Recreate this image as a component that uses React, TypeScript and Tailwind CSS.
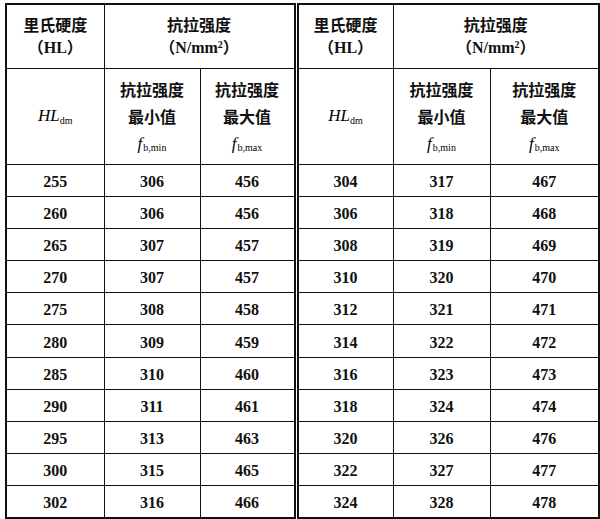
import type { ReactNode } from 'react';

const rows: [number, number, number, number, number, number][] = [
  [255, 306, 456, 304, 317, 467],
  [260, 306, 456, 306, 318, 468],
  [265, 307, 457, 308, 319, 469],
  [270, 307, 457, 310, 320, 470],
  [275, 308, 458, 312, 321, 471],
  [280, 309, 459, 314, 322, 472],
  [285, 310, 460, 316, 323, 473],
  [290, 311, 461, 318, 324, 474],
  [295, 313, 463, 320, 326, 476],
  [300, 315, 465, 322, 327, 477],
  [302, 316, 466, 324, 328, 478],
];

const cjk = "font-['Noto_Sans_CJK_SC',sans-serif] font-bold text-[16px] text-[#111]";
const latin = "font-['Liberation_Serif',serif] font-bold text-[16px]";
const cell = 'border border-[#111] text-center align-middle p-0';
const split = 'border-r-[5px] border-double';

function Hl() {
  return (
    <span className="font-['Liberation_Serif',serif] text-[17px] italic">
      HL<sub className="text-[10px] not-italic">dm</sub>
    </span>
  );
}

function Fb({ sub }: { sub: string }) {
  return (
    <span className="font-['Liberation_Serif',serif] text-[16px]">
      <i className="text-[17px]">f</i>
      <sub className="ml-[1px] text-[10px]">b,{sub}</sub>
    </span>
  );
}

function SubHead({ label, sub }: { label: string; sub: string }) {
  return (
    <div className="flex flex-col items-center leading-[27px]">
      <span className={cjk}>抗拉强度</span>
      <span className={cjk}>{label}</span>
      <Fb sub={sub} />
    </div>
  );
}

function Head({ children }: { children: ReactNode }) {
  return <div className="flex flex-col items-center leading-[22px]">{children}</div>;
}

function HardnessHead() {
  return (
    <Head>
      <span className={cjk}>里氏硬度</span>
      <span className={cjk}>
        （<span className={latin}>HL</span>）
      </span>
    </Head>
  );
}

function StrengthHead() {
  return (
    <Head>
      <span className={cjk}>抗拉强度</span>
      <span className={cjk}>
        （
        <span className={latin}>
          N/mm<sup className="text-[10px]">2</sup>
        </span>
        ）
      </span>
    </Head>
  );
}

export default function App() {
  return (
    <div className="min-h-[519px] w-[600px] bg-white pl-[5px] pt-[3px]">
      <table className="w-[593px] table-fixed border-collapse border-2 border-[#111]">
        <colgroup>
          <col className="w-[98px]" />
          <col className="w-[96px]" />
          <col className="w-[96px]" />
          <col className="w-[97px]" />
          <col className="w-[97px]" />
          <col className="w-[109px]" />
        </colgroup>
        <thead>
          <tr className="h-[64px]">
            <th className={cell}>
              <HardnessHead />
            </th>
            <th colSpan={2} className={`${cell} ${split}`}>
              <StrengthHead />
            </th>
            <th className={cell}>
              <HardnessHead />
            </th>
            <th colSpan={2} className={cell}>
              <StrengthHead />
            </th>
          </tr>
          <tr className="h-[96px]">
            <td className={cell}>
              <Hl />
            </td>
            <td className={cell}>
              <SubHead label="最小值" sub="min" />
            </td>
            <td className={`${cell} ${split}`}>
              <SubHead label="最大值" sub="max" />
            </td>
            <td className={cell}>
              <Hl />
            </td>
            <td className={cell}>
              <SubHead label="最小值" sub="min" />
            </td>
            <td className={cell}>
              <SubHead label="最大值" sub="max" />
            </td>
          </tr>
        </thead>
        <tbody className="font-['Liberation_Serif',serif] text-[16px] font-bold text-[#111]">
          {rows.map((r) => (
            <tr key={r[0]} className="h-[32.2px]">
              {r.map((v, i) => (
                <td key={i} className={i === 2 ? `${cell} ${split} pt-[3px]` : `${cell} pt-[3px]`}>
                  {v}
                </td>
              ))}
            </tr>
          ))}
        </tbody>
      </table>
    </div>
  );
}
